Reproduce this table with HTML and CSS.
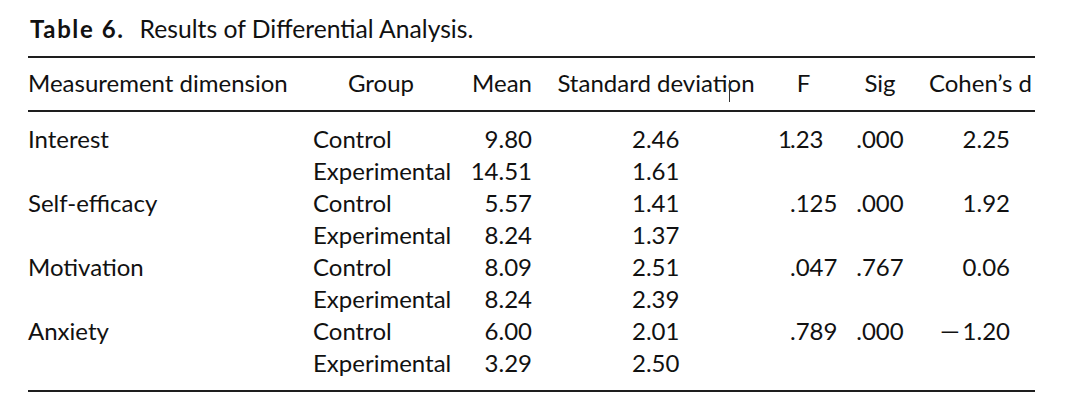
FILE: index.html
```html
<!DOCTYPE html>
<html lang="en">
<head>
<meta charset="utf-8">
<link rel="stylesheet" href="styles.css">
</head>
<body>
<main class="page">
  <p class="caption"><span class="label">Table 6.</span><span class="title">Results of Differential Analysis.</span></p>
  <table class="results">
    <colgroup>
      <col class="col-dim">
      <col class="col-group">
      <col class="col-mean">
      <col class="col-sd">
      <col class="col-f">
      <col class="col-sig">
      <col class="col-d">
    </colgroup>
    <thead>
      <tr>
        <th class="h-dim">Measurement dimension</th>
        <th class="h-group">Group</th>
        <th class="h-mean">Mean</th>
        <th class="h-sd">Standard deviat<span class="caret">i</span>on</th>
        <th class="h-f">F</th>
        <th class="h-sig">Sig</th>
        <th class="h-d">Cohen’s d</th>
      </tr>
    </thead>
    <tbody>
      <tr class="first">
        <td>Interest</td><td>Control</td><td class="mean">9.80</td><td class="sd">2.46</td>
        <td class="f"><span class="int">1</span>.23</td><td class="sig">.000</td><td class="d">2.25</td>
      </tr>
      <tr>
        <td></td><td>Experimental</td><td class="mean">14.51</td><td class="sd">1.61</td>
        <td class="f"></td><td class="sig"></td><td class="d"></td>
      </tr>
      <tr>
        <td>Self-efficacy</td><td>Control</td><td class="mean">5.57</td><td class="sd">1.41</td>
        <td class="f frac">.125</td><td class="sig">.000</td><td class="d">1.92</td>
      </tr>
      <tr>
        <td></td><td>Experimental</td><td class="mean">8.24</td><td class="sd">1.37</td>
        <td class="f"></td><td class="sig"></td><td class="d"></td>
      </tr>
      <tr>
        <td>Motivation</td><td>Control</td><td class="mean">8.09</td><td class="sd">2.51</td>
        <td class="f frac">.047</td><td class="sig">.767</td><td class="d">0.06</td>
      </tr>
      <tr>
        <td></td><td>Experimental</td><td class="mean">8.24</td><td class="sd">2.39</td>
        <td class="f"></td><td class="sig"></td><td class="d"></td>
      </tr>
      <tr>
        <td>Anxiety</td><td>Control</td><td class="mean">6.00</td><td class="sd">2.01</td>
        <td class="f frac">.789</td><td class="sig">.000</td><td class="d"><span class="minus">−</span>1.20</td>
      </tr>
      <tr class="last">
        <td></td><td>Experimental</td><td class="mean">3.29</td><td class="sd">2.50</td>
        <td class="f"></td><td class="sig"></td><td class="d"></td>
      </tr>
    </tbody>
  </table>
</main>
</body>
</html>
```
FILE: styles.css
```css
html, body {
  margin: 0;
  padding: 0;
  background: #ffffff;
}

.page {
  padding: 13px 0 0 28px;
  font-family: "Lato", "Open Sans", sans-serif;
  color: #111111;
  width: 1007px;
}

.caption {
  margin: 0 0 12px 2px;
  font-size: 24px;
  line-height: 31px;
  white-space: nowrap;
}

.caption .label {
  font-weight: 700;
  letter-spacing: 1.6px;
  margin-right: 15px;
}

.caption .title {
  font-size: 24.7px;
}

.results {
  border-collapse: collapse;
  table-layout: fixed;
  width: 1007px;
  font-size: 24px;
  line-height: 32px;
  border-top: 2px solid #1e1e1e;
  border-bottom: 2px solid #1e1e1e;
}

.col-dim { width: 285px; }
.col-group { width: 142px; }
.col-mean { width: 77px; }
.col-sd { width: 246px; }
.col-f { width: 57px; }
.col-sig { width: 90px; }
.col-d { width: 110px; }

.results th,
.results td {
  padding: 0;
  font-weight: 400;
  white-space: nowrap;
  vertical-align: top;
}

.results thead th {
  padding-top: 9px;
  padding-bottom: 11px;
  border-bottom: 2px solid #1e1e1e;
}

.h-dim { text-align: left; }
.h-group { text-align: center; padding-right: 6px !important; }
.h-mean { text-align: right; }
.h-sd { text-align: center; padding-left: 2px !important; }
.h-f { text-align: center; padding-right: 6px !important; }
.h-sig { text-align: center; }
.h-d { text-align: right; padding-right: 3px !important; }

.caret {
  position: relative;
}
.caret::after {
  content: "";
  position: absolute;
  left: 1px;
  top: 12px;
  width: 1px;
  height: 22px;
  background: #333333;
}

.results tr.first td { padding-top: 11px; }
.results tr.last td { padding-bottom: 11px; }

.mean { text-align: right; }
.sd { text-align: left; padding-left: 100px !important; }
.f { text-align: left; }
.f .int {
  display: inline-block;
  width: 12px;
  text-align: right;
}
.f.frac { padding-left: 12px !important; }
.sig { text-align: center; }
.d { text-align: right; padding-right: 25px !important; }
.d .minus {
  display: inline-block;
  transform: scaleX(1.6);
  margin-right: 6px;
}
```
